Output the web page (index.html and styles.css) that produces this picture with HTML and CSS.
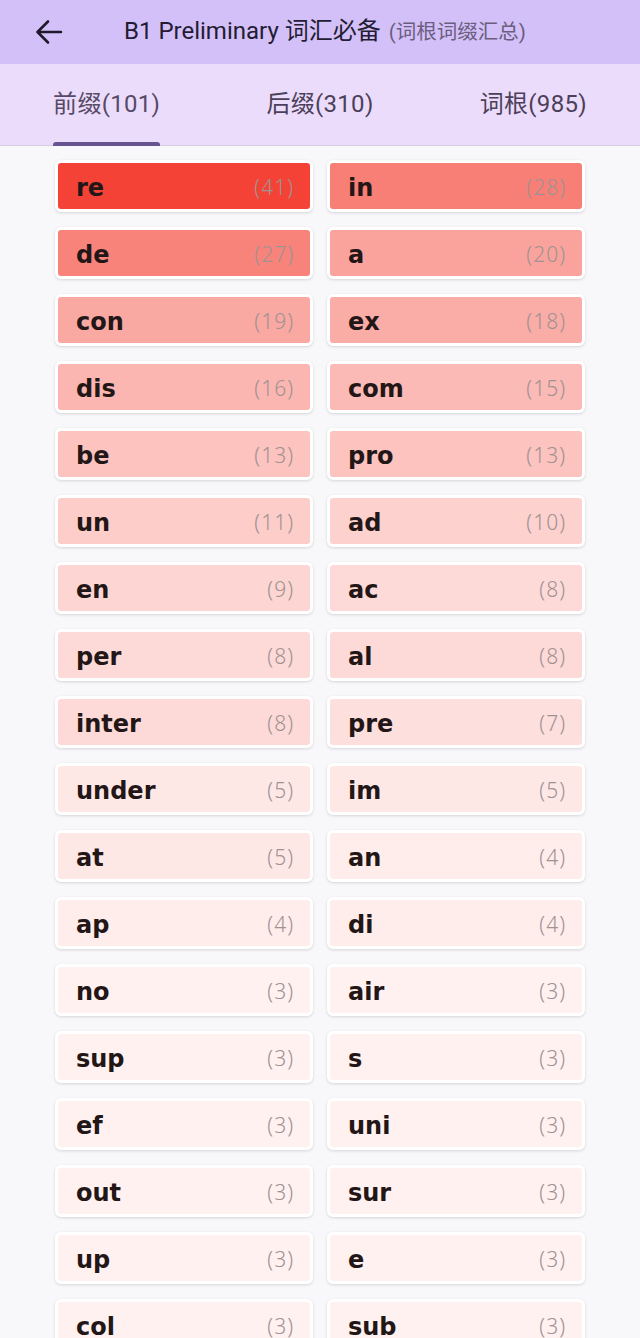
FILE: index.html
```html
<!DOCTYPE html>
<html lang="zh">
<head>
<meta charset="utf-8">
<link rel="stylesheet" href="styles.css">
</head>
<body>
<div class="app">
  <header class="topbar">
    <svg class="back" width="28" height="26" viewBox="0 0 28 26"><path d="M26 13H3M13 2.5L2.5 13 13 23.5" fill="none" stroke="#1f1a2b" stroke-width="2.6" stroke-linecap="round" stroke-linejoin="round"/></svg>
    <h1 class="title">B1 Preliminary 词汇必备<span class="sub">(词根词缀汇总)</span></h1>
  </header>
  <nav class="tabs">
    <div class="tab active"><span class="tab-label">前缀(101)</span></div>
    <div class="tab"><span class="tab-label">后缀(310)</span></div>
    <div class="tab"><span class="tab-label">词根(985)</span></div>
  </nav>
  <main class="grid">
    <div class="card" style="background-color: rgb(244,67,54)"><span class="word">re</span><span class="count">(41)</span></div>
    <div class="card" style="background-color: rgb(248,127,118)"><span class="word">in</span><span class="count">(28)</span></div>
    <div class="card" style="background-color: rgb(248,131,123)"><span class="word">de</span><span class="count">(27)</span></div>
    <div class="card" style="background-color: rgb(250,163,157)"><span class="word">a</span><span class="count">(20)</span></div>
    <div class="card" style="background-color: rgb(250,168,162)"><span class="word">con</span><span class="count">(19)</span></div>
    <div class="card" style="background-color: rgb(250,172,167)"><span class="word">ex</span><span class="count">(18)</span></div>
    <div class="card" style="background-color: rgb(251,182,177)"><span class="word">dis</span><span class="count">(16)</span></div>
    <div class="card" style="background-color: rgb(251,186,181)"><span class="word">com</span><span class="count">(15)</span></div>
    <div class="card" style="background-color: rgb(252,195,191)"><span class="word">be</span><span class="count">(13)</span></div>
    <div class="card" style="background-color: rgb(252,195,191)"><span class="word">pro</span><span class="count">(13)</span></div>
    <div class="card" style="background-color: rgb(252,205,201)"><span class="word">un</span><span class="count">(11)</span></div>
    <div class="card" style="background-color: rgb(252,209,206)"><span class="word">ad</span><span class="count">(10)</span></div>
    <div class="card" style="background-color: rgb(253,214,211)"><span class="word">en</span><span class="count">(9)</span></div>
    <div class="card" style="background-color: rgb(253,218,216)"><span class="word">ac</span><span class="count">(8)</span></div>
    <div class="card" style="background-color: rgb(253,218,216)"><span class="word">per</span><span class="count">(8)</span></div>
    <div class="card" style="background-color: rgb(253,218,216)"><span class="word">al</span><span class="count">(8)</span></div>
    <div class="card" style="background-color: rgb(253,218,216)"><span class="word">inter</span><span class="count">(8)</span></div>
    <div class="card" style="background-color: rgb(253,223,221)"><span class="word">pre</span><span class="count">(7)</span></div>
    <div class="card" style="background-color: rgb(254,232,230)"><span class="word">under</span><span class="count">(5)</span></div>
    <div class="card" style="background-color: rgb(254,232,230)"><span class="word">im</span><span class="count">(5)</span></div>
    <div class="card" style="background-color: rgb(254,232,230)"><span class="word">at</span><span class="count">(5)</span></div>
    <div class="card" style="background-color: rgb(254,237,235)"><span class="word">an</span><span class="count">(4)</span></div>
    <div class="card" style="background-color: rgb(254,237,235)"><span class="word">ap</span><span class="count">(4)</span></div>
    <div class="card" style="background-color: rgb(254,237,235)"><span class="word">di</span><span class="count">(4)</span></div>
    <div class="card" style="background-color: rgb(254,241,240)"><span class="word">no</span><span class="count">(3)</span></div>
    <div class="card" style="background-color: rgb(254,241,240)"><span class="word">air</span><span class="count">(3)</span></div>
    <div class="card" style="background-color: rgb(254,241,240)"><span class="word">sup</span><span class="count">(3)</span></div>
    <div class="card" style="background-color: rgb(254,241,240)"><span class="word">s</span><span class="count">(3)</span></div>
    <div class="card" style="background-color: rgb(254,241,240)"><span class="word">ef</span><span class="count">(3)</span></div>
    <div class="card" style="background-color: rgb(254,241,240)"><span class="word">uni</span><span class="count">(3)</span></div>
    <div class="card" style="background-color: rgb(254,241,240)"><span class="word">out</span><span class="count">(3)</span></div>
    <div class="card" style="background-color: rgb(254,241,240)"><span class="word">sur</span><span class="count">(3)</span></div>
    <div class="card" style="background-color: rgb(254,241,240)"><span class="word">up</span><span class="count">(3)</span></div>
    <div class="card" style="background-color: rgb(254,241,240)"><span class="word">e</span><span class="count">(3)</span></div>
    <div class="card" style="background-color: rgb(254,241,240)"><span class="word">col</span><span class="count">(3)</span></div>
    <div class="card" style="background-color: rgb(254,241,240)"><span class="word">sub</span><span class="count">(3)</span></div>
  </main>
</div>
</body>
</html>
```

FILE: styles.css
```css
* { box-sizing: border-box; }
html, body { margin: 0; padding: 0; }
body {
  background: #f8f8fa;
  font-family: Roboto, "Noto Sans CJK SC", sans-serif;
  width: 640px;
  height: 1338px;
  overflow: hidden;
}
.app { display: flex; flex-direction: column; }
.topbar {
  height: 64px;
  background: #d4c0f8;
  display: flex;
  align-items: center;
  padding-left: 35px;
}
.back { flex: none; }
.title {
  margin: -2px 0 0 61px;
  font-weight: 400;
  font-size: 24px;
  line-height: 30px;
  color: #231c33;
  white-space: nowrap;
}
.sub {
  font-size: 20.5px;
  color: #6a5d80;
  margin-left: 8px;
}
.tabs {
  height: 82px;
  background: #ebdcfc;
  display: grid;
  grid-template-columns: repeat(3, 1fr);
  border-bottom: 1px solid #d6cbe0;
}
.tab {
  display: flex;
  justify-content: center;
  align-items: stretch;
}
.tab-label {
  display: flex;
  align-items: center;
  font-size: 24px;
  letter-spacing: 0.3px;
  color: #4b4058;
  padding-bottom: 6px;
  position: relative;
}
.tab.active .tab-label { color: #574a66; }
.tab.active .tab-label::after {
  content: "";
  position: absolute;
  left: 0;
  right: 0;
  bottom: -1px;
  height: 4px;
  background: #665490;
  border-radius: 3px 3px 0 0;
}
.grid {
  display: grid;
  grid-template-columns: 258px 258px;
  column-gap: 14px;
  row-gap: 15px;
  padding: 14px 55px 0;
}
.card {
  height: 52px;
  border: 3px solid #fff;
  border-radius: 6px;
  box-shadow: 0 1px 3px rgba(0, 0, 0, 0.14);
  display: flex;
  align-items: center;
  justify-content: space-between;
  padding: 0 16px 0 18px;
}
.word {
  font-family: "DejaVu Sans", sans-serif;
  font-weight: 700;
  font-size: 24px;
  padding-top: 4px;
  color: #231616;
}
.count {
  font-family: "Noto Sans", sans-serif;
  font-weight: 300;
  font-size: 21px;
  letter-spacing: 1px;
  padding-top: 1px;
  color: #a09292;
}
```
